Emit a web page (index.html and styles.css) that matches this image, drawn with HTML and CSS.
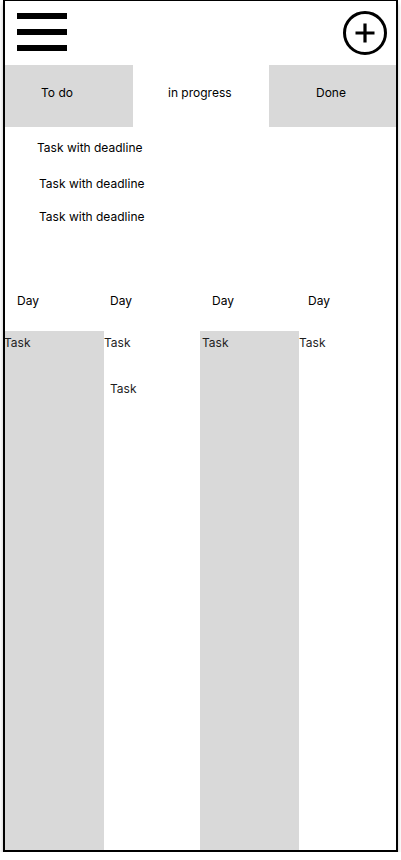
FILE: index.html
```html
<!DOCTYPE html>
<html lang="en">
<head>
<meta charset="utf-8">
<title>Tasks</title>
<link rel="stylesheet" href="styles.css">
</head>
<body>
<div class="frame">
  <header class="header">
    <div class="burger"><span></span><span></span><span></span></div>
    <svg class="plus" width="46" height="46" viewBox="0 0 46 46" aria-label="Add">
      <circle cx="23" cy="23" r="20.5" fill="none" stroke="#000" stroke-width="3"/>
      <path d="M23 13.5V32.5M13.5 23H32.5" stroke="#000" stroke-width="3.2" fill="none"/>
    </svg>
  </header>
  <nav class="tabs">
    <div class="tab tab-todo">To do</div>
    <div class="tab tab-progress">in progress</div>
    <div class="tab tab-done">Done</div>
  </nav>
  <section class="deadlines">
    <div class="deadline d1">Task with deadline</div>
    <div class="deadline d2">Task with deadline</div>
    <div class="deadline d3">Task with deadline</div>
  </section>
  <div class="days">
    <div class="day day1">Day</div>
    <div class="day day2">Day</div>
    <div class="day day3">Day</div>
    <div class="day day4">Day</div>
  </div>
  <div class="board">
    <div class="col col1 gray"><div class="task">Task</div></div>
    <div class="col col2"><div class="task">Task</div><div class="task task-extra">Task</div></div>
    <div class="col col3 gray"><div class="task">Task</div></div>
    <div class="col col4"><div class="task">Task</div></div>
  </div>
</div>
</body>
</html>
```
FILE: styles.css
```css
* { box-sizing: border-box; }
html, body { margin: 0; padding: 0; background: #fff; }
body {
  font-family: Inter, "Noto Sans", "Liberation Sans", sans-serif;
  font-size: 12px;
  line-height: 16px;
  color: #1e1e1e;
}
.frame {
  margin-left: 3px;
  width: 395px;
  height: 852px;
  border: 2px solid #000;
  border-top-width: 1px;
  box-shadow: 0 4px 4px rgba(0,0,0,0.25);
  display: flex;
  flex-direction: column;
  overflow: hidden;
}
.header {
  height: 64px;
  display: flex;
  justify-content: space-between;
  align-items: center;
  padding: 0 8px 0 12px;
}
.burger {
  display: flex;
  flex-direction: column;
  gap: 10px;
  margin-top: -2px;
}
.burger span {
  display: block;
  width: 50px;
  height: 6px;
  background: #000;
}
.plus { display: block; margin-top: -1px; }
.tabs {
  display: grid;
  grid-template-columns: 128px 136px 127px;
  height: 62px;
}
.tab {
  display: flex;
  align-items: center;
  padding-bottom: 6px;
  font-size: 12px;
  color: #000;
}
.tab-todo { background: #d9d9d9; padding-left: 36px; }
.tab-progress { padding-left: 35px; }
.tab-done { background: #d9d9d9; padding-left: 47px; }
.deadlines {
  display: flex;
  flex-direction: column;
  padding-top: 13px;
  height: 166px;
}
.deadline { color: #000; }
.d1 { padding-left: 32px; }
.d2 { padding-left: 34px; margin-top: 20px; }
.d3 { padding-left: 34px; margin-top: 17px; }
.days {
  display: grid;
  grid-template-columns: 99px 96px 99px 97px;
  height: 38px;
}
.day { color: #000; }
.day1 { padding-left: 12px; }
.day2 { padding-left: 6px; }
.day3 { padding-left: 12px; }
.day4 { padding-left: 9px; }
.board {
  flex: 1;
  display: grid;
  grid-template-columns: 99px 96px 99px 97px;
}
.col { padding-top: 4px; }
.gray { background: #d9d9d9; }
.col1 .task { margin-left: -1px; }
.col2 .task { padding-left: 0; }
.col3 .task { padding-left: 2px; }
.col4 .task { padding-left: 0; }
.col2 .task-extra { padding-left: 6px; margin-top: 30px; }
.task { font-size: 12px; }
```
